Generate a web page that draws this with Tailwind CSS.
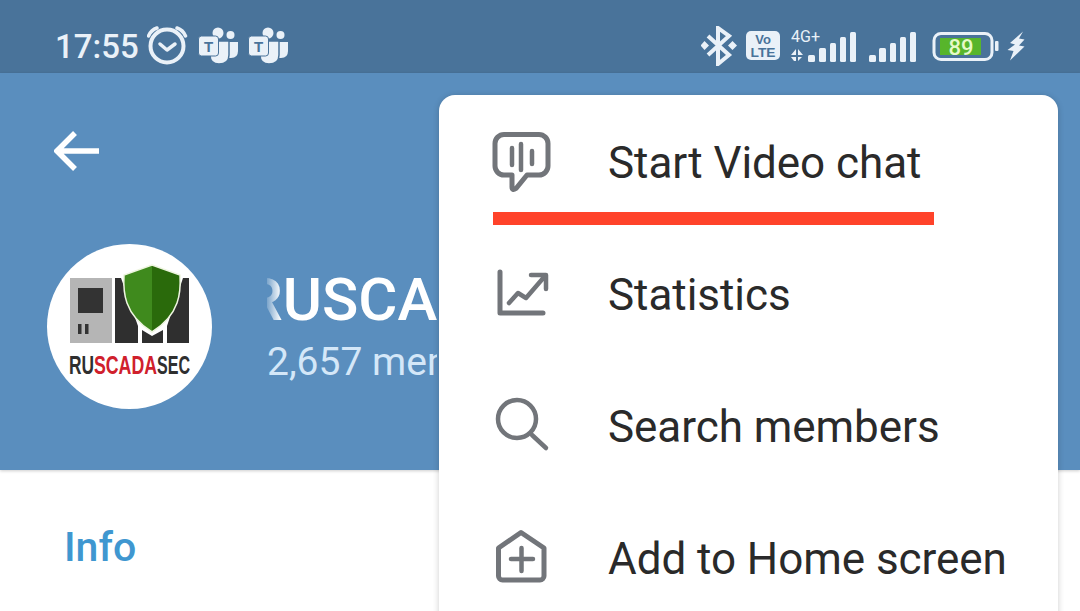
<!DOCTYPE html>
<html lang="en">
<head>
    <meta charset="UTF-8">
    <meta name="viewport" content="width=device-width, initial-scale=1.0">
    <title>RUSCADASEC</title>
    <script src="https://cdn.jsdelivr.net/npm/@tailwindcss/browser@4"></script>
</head>
<body class="bg-white font-['Roboto',sans-serif] overflow-hidden">
<div class="relative w-[1080px] h-[611px] overflow-hidden bg-white">

    <!-- status bar -->
    <div class="h-[73px] bg-[#49739a] flex items-center justify-between pt-[19px] pl-[55px] pr-[55px] text-[#eaf1f8]">
        <div class="flex items-center">
            <span class="text-[33px] leading-none font-medium w-[92px]">17:55</span>
            <svg class="w-[41px] h-[40px]" viewBox="147 26 41 40" fill="none" stroke="#eaf1f8">
                <circle cx="167" cy="46" r="16.5" stroke-width="4"/>
                <path d="M148.5 36 Q151 30 157 28 M185.5 36 Q183 30 177 28" stroke-width="3.5" stroke-linecap="round"/>
                <path d="M160 44 L167 50 L175 44" stroke-width="3.5" stroke-linecap="round" stroke-linejoin="round"/>
            </svg>
            <svg class="w-[41px] h-[38px] ml-[9px]" viewBox="197 27 41 38">
                <circle cx="218" cy="33" r="5.5" fill="#eaf1f8"/>
                <circle cx="230.500" cy="35" r="4" fill="#eaf1f8"/>
                <path d="M228 42 H238 V51 Q238 58 231 58 L226 58 Z" fill="#eaf1f8"/>
                <path d="M210 41 H229 V55 Q229 64 219 64 Q210 64 210 55 Z" fill="#eaf1f8" stroke="#49739a" stroke-width="1.500"/>
                <rect x="198.500" y="36" width="20" height="20" rx="3" fill="#eaf1f8" stroke="#49739a" stroke-width="1"/>
                <text x="208.500" y="51.500" text-anchor="middle" font-family="Liberation Sans" font-weight="700" font-size="15" fill="#49739a">T</text>
            </svg>
            <svg class="w-[41px] h-[38px] ml-[9px]" viewBox="197 27 41 38">
                <circle cx="218" cy="33" r="5.5" fill="#eaf1f8"/>
                <circle cx="230.500" cy="35" r="4" fill="#eaf1f8"/>
                <path d="M228 42 H238 V51 Q238 58 231 58 L226 58 Z" fill="#eaf1f8"/>
                <path d="M210 41 H229 V55 Q229 64 219 64 Q210 64 210 55 Z" fill="#eaf1f8" stroke="#49739a" stroke-width="1.500"/>
                <rect x="198.500" y="36" width="20" height="20" rx="3" fill="#eaf1f8" stroke="#49739a" stroke-width="1"/>
                <text x="208.500" y="51.500" text-anchor="middle" font-family="Liberation Sans" font-weight="700" font-size="15" fill="#49739a">T</text>
            </svg>
        </div>
        <div class="flex items-center">
            <svg class="w-[36px] h-[40px]" viewBox="702 26 36 40" fill="none">
                <path d="M709 36 L730 55 L719 64 V28 L730 36 L709 55" stroke="#eaf1f8" stroke-width="4"/>
                <path d="M705.500 41 L710 45.500 L705.500 50 L701.500 45.500 Z M733.500 41 L738 45.500 L733.500 50 L729 45.500 Z" fill="#eaf1f8"/>
            </svg>
            <svg class="w-[35px] h-[30px] ml-[9px]" viewBox="747 32 35 30">
                <rect x="747" y="32" width="34" height="29" rx="5" fill="#eaf1f8"/>
                <text x="764" y="45" text-anchor="middle" font-family="Liberation Sans" font-weight="700" font-size="13" fill="#49739a">Vo</text>
                <text x="764" y="58" text-anchor="middle" font-family="Liberation Sans" font-weight="700" font-size="13" fill="#49739a" textLength="25" lengthAdjust="spacingAndGlyphs">LTE</text>
            </svg>
            <svg class="w-[66px] h-[36px] ml-[10px]" viewBox="792 28 66 36" fill="#eaf1f8">
                <text x="792" y="42" font-family="Roboto" font-size="16">4G+</text>
                <path d="M792 55 L797 49 V55 Z M792 57 H797 V61 H795 Z M799 49 L804 55 H799 Z M799 57 H803 L799 61 Z"/>
                <rect x="809" y="55" width="7" height="7" rx="1.500"/>
                <rect x="820" y="48" width="7" height="14" rx="1.500"/>
                <rect x="831" y="43" width="6" height="19" rx="1.500"/>
                <rect x="841" y="37" width="6" height="25" rx="1.500"/>
                <rect x="851" y="32" width="6" height="30" rx="1.500"/>
            </svg>
            <svg class="w-[48px] h-[36px] ml-[12px]" viewBox="870 28 48 36" fill="#eaf1f8">
                <rect x="870" y="55" width="7" height="7" rx="1.500"/>
                <rect x="880" y="48" width="7" height="14" rx="1.500"/>
                <rect x="891" y="43" width="6" height="19" rx="1.500"/>
                <rect x="901" y="37" width="6" height="25" rx="1.500"/>
                <rect x="911" y="32" width="6" height="30" rx="1.500"/>
            </svg>
            <svg class="w-[67px] h-[36px] ml-[15px]" viewBox="932 28 67 36">
                <rect x="934" y="33.500" width="58" height="26" rx="7" fill="none" stroke="#eaf1f8" stroke-width="3"/>
                <rect x="940" y="38" width="41" height="17" fill="#57b52b"/>
                <rect x="995" y="41" width="3.500" height="10" rx="1" fill="#eaf1f8"/>
                <text x="961" y="54.500" text-anchor="middle" font-family="Roboto" font-weight="500" font-size="22" fill="#e6f9c8">89</text>
            </svg>
            <svg class="w-[18px] h-[30px] ml-[8px]" viewBox="1007 31 18 30" fill="#eaf1f8">
                <path d="M1023 31.500 L1010 43 L1015 44.500 L1007.500 50 L1013.500 51 L1010 60.500 L1024.500 46.500 L1019 45.500 L1024.500 39.500 L1019 38.500 Z"/>
            </svg>
        </div>
    </div>

    <!-- chat header -->
    <div class="h-[397px] bg-[#5a8ebe] pt-[58px] pl-[47px] shadow-[0_1px_3px_rgba(0,0,0,0.2)]">
        <svg class="w-[46px] h-[40px] ml-[7px]" viewBox="0 0 46 40" fill="none" stroke="#fff" stroke-width="5.500">
            <path d="M3 20 H45 M21 2 L3 20 L21 38"/>
        </svg>
        <div class="flex items-center mt-[73px]">
            <svg class="w-[165px] h-[165px] shrink-0" viewBox="0 0 165 165">
                <circle cx="82.500" cy="82.500" r="82.500" fill="#fff"/>
                <rect x="23" y="34" width="42" height="65" fill="#b5b5b5"/>
                <rect x="31" y="44" width="25" height="25" fill="#333"/>
                <rect x="31" y="80" width="3.500" height="10" fill="#333"/>
                <rect x="38" y="80" width="3.500" height="10" fill="#333"/>
                <path d="M68 34 H74 L91 82 V99 H68 Z M95 86 L105 92 L116 86 V99 H95 Z M136 34 H142 V99 H120 V82 Z" fill="#2f2f2f"/>
                <path d="M105 21 L77 31 Q76 48 80 59 Q86 76 105 88 Z" fill="#3f8a1d"/>
                <path d="M105 21 L133 31 Q134 48 130 59 Q124 76 105 88 Z" fill="#2a6a0b"/>
                <path d="M105 21 L133 31 Q134 48 130 59 Q124 76 105 88 Q86 76 80 59 Q76 48 77 31 Z" fill="none" stroke="#eef5e0" stroke-width="1.500"/>
                <text x="22" y="130" font-family="Liberation Sans" font-weight="700" font-size="26" fill="#2f2f2f" textLength="25" lengthAdjust="spacingAndGlyphs">RU</text>
                <text x="47" y="130" font-family="Liberation Sans" font-weight="700" font-size="26" fill="#d0202c" textLength="63" lengthAdjust="spacingAndGlyphs">SCADA</text>
                <text x="110" y="130" font-family="Liberation Sans" font-weight="700" font-size="26" fill="#2f2f2f" textLength="33" lengthAdjust="spacingAndGlyphs">SEC</text>
            </svg>
            <div class="ml-[55px] w-[170px] overflow-hidden relative">
                <div class="text-[60px] leading-[62px] font-medium text-white whitespace-nowrap -ml-[22px]">RUSCADASEC</div>
                <div class="text-[39px] leading-[44px] mt-[9px] text-[#d4e7f8] whitespace-nowrap">2,657 members</div>
                <div class="absolute left-0 top-0 w-[14px] h-[60px] bg-gradient-to-r from-[#5a8ebe]/80 to-transparent"></div>
            </div>
        </div>
    </div>

    <!-- tabs -->
    <div class="pl-[64px] pt-[52px] text-[41px] leading-[50px] font-medium text-[#3f97d0]">Info</div>

    <!-- overflow menu -->
    <div class="absolute left-[439px] top-[95px] w-[619px] h-[560px] bg-white rounded-[16px] shadow-[0_1px_6px_rgba(0,0,0,0.2)] pt-[2px] text-[#2a2a2a] text-[44px]">
        <div class="h-[132px] flex items-center pl-[52px]">
            <svg class="w-[60px] h-[64px] shrink-0" viewBox="0 0 60 64" fill="none" stroke="#72757a" stroke-width="5" stroke-linecap="round" stroke-linejoin="round">
                <path d="M13 3.500 H48 a9 9 0 0 1 9 9 V35 a9 9 0 0 1 -9 9 H36 L25 57.500 Q21 60 21 56 V44 H13 a9 9 0 0 1 -9 -9 V12.500 a9 9 0 0 1 9 -9 Z"/>
                <path d="M21 17 V34 M30 13 V39 M41 20 V33" stroke-width="4.500"/>
            </svg>
            <span class="ml-[57px] whitespace-nowrap tracking-[-0.05px]">Start Video chat</span>
        </div>
        <div class="h-[132px] flex items-center pl-[52px]">
            <svg class="w-[60px] h-[64px] shrink-0" viewBox="0 0 60 64" fill="none" stroke="#72757a" stroke-width="5" stroke-linecap="round" stroke-linejoin="round">
                <path d="M9 9 V50 H52"/>
                <path d="M18 40 L27 30 L35 35 L54 13 M40 12 H55 V26" stroke-width="4.500"/>
            </svg>
            <span class="ml-[57px] whitespace-nowrap tracking-[-0.05px]">Statistics</span>
        </div>
        <div class="h-[132px] flex items-center pl-[52px]">
            <svg class="w-[60px] h-[64px] shrink-0" viewBox="0 0 60 64" fill="none" stroke="#72757a" stroke-width="4.500" stroke-linecap="round">
                <circle cx="26" cy="24" r="19"/>
                <path d="M41 40 L55 53"/>
            </svg>
            <span class="ml-[57px] whitespace-nowrap tracking-[-0.05px]">Search members</span>
        </div>
        <div class="h-[132px] flex items-center pl-[52px]">
            <svg class="w-[60px] h-[64px] shrink-0" viewBox="0 0 60 64" fill="none" stroke="#72757a" stroke-width="5" stroke-linecap="round" stroke-linejoin="round">
                <path d="M30 5.500 L53 21 V49 a4 4 0 0 1 -4 4 H11.500 a4 4 0 0 1 -4 -4 V21 Z"/>
                <path d="M20 32 H42 M30.500 21 V44" stroke-width="4.500"/>
            </svg>
            <span class="ml-[57px] whitespace-nowrap tracking-[-0.05px]">Add to Home screen</span>
        </div>
        <!-- red annotation stroke -->
        <div class="absolute left-[54px] top-[117px] w-[441px] h-[13px] bg-[#ff432a]"></div>
    </div>
</div>
</body>
</html>
